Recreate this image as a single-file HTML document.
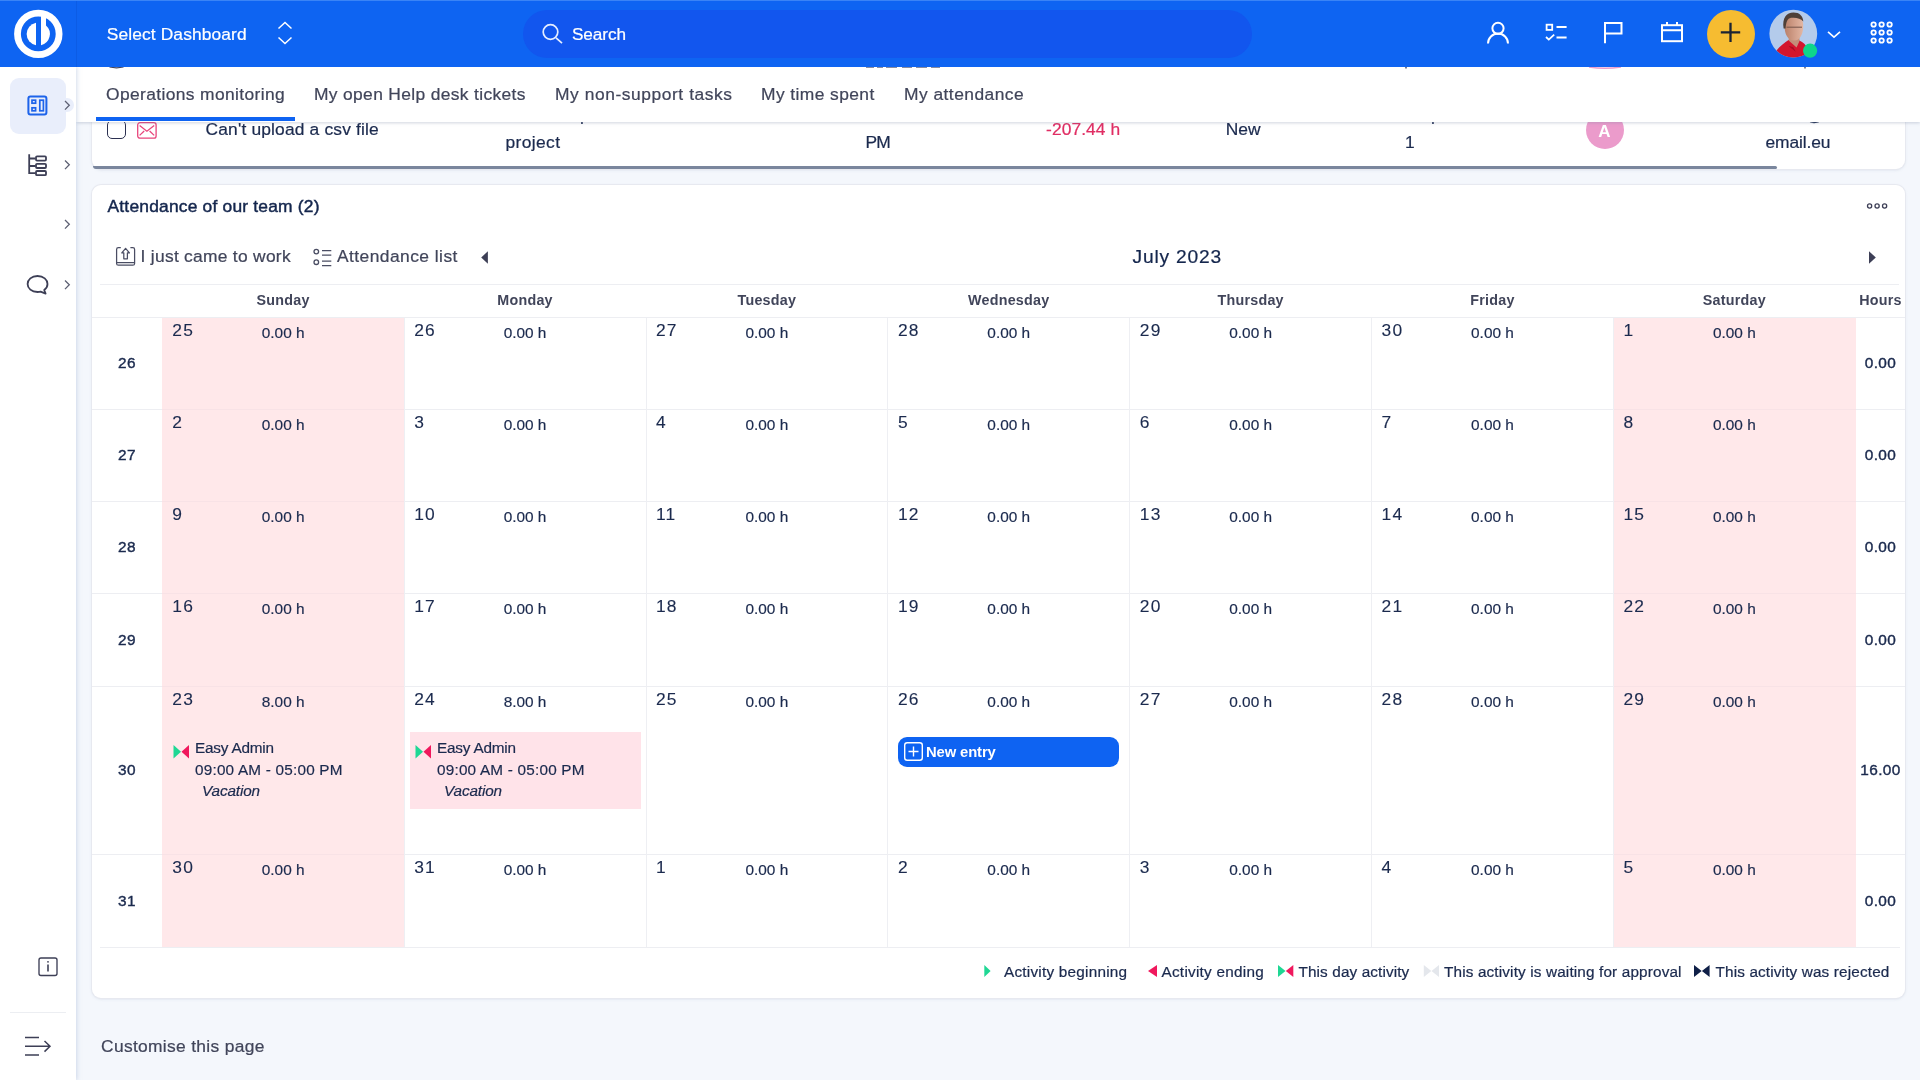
<!DOCTYPE html>
<html lang="en">
<head>
<meta charset="utf-8">
<title>Operations monitoring</title>
<style>
*{box-sizing:border-box;margin:0;padding:0}
html,body{width:1920px;height:1080px;overflow:hidden}
body{position:relative;will-change:transform;background:#f4f7fc;font-family:"Liberation Sans",sans-serif;color:#1b2a4e;font-size:15px}
.abs{position:absolute}
.t{position:absolute;white-space:nowrap;line-height:1;-webkit-text-stroke:0.22px currentColor}
svg{position:absolute;overflow:visible}
/* header */
#hdr{position:absolute;left:0;top:0;width:1920px;height:67px;background:#0e64f2;z-index:20;box-shadow:inset 0 1px 0 #3a84f6}
#hdr .search{position:absolute;left:523px;top:10.4px;width:729px;height:47.6px;border-radius:24px;background:#1256ee}
#hdr .t{color:#fff}
/* sidebar */
#side{position:absolute;left:0;top:67px;width:76px;height:1013px;background:#fff;z-index:15;box-shadow:1px 0 4px rgba(170,185,215,.5)}
#side .act{position:absolute;left:10px;top:11px;width:56px;height:56px;border-radius:9px;background:#e9eefb}
/* tabs */
#tabs{position:absolute;left:76px;top:67px;width:1844px;height:54.5px;background:#fff;z-index:10;box-shadow:0 1px 3px rgba(120,135,160,.35)}
#tabs .t{color:#41455a;font-size:17.4px;top:19.3px}
#tabs .ul{position:absolute;left:20px;top:50px;width:198.6px;height:4px;background:#0e63f2}
/* cards */
.card{position:absolute;background:#fff;border-radius:9px;box-shadow:0 0 0 1px #e7e9f0,0 1px 3px rgba(150,165,190,.3)}
#c1{left:92px;top:100px;width:1813px;height:69px;border-radius:0 0 9px 9px}
.r1{font-size:17.4px;color:#1b2a4e}
#c2{left:92px;top:185px;width:1813px;height:813px}

/* calendar */
.hl{position:absolute;height:1px;background:#edeef2}
.hl2{position:absolute;height:1px;background:#f8e2e6}
.vl{position:absolute;width:1px;background:#eeeff3}
.we{position:absolute;background:#ffe8ea}
.wd{font-size:14.3px;font-weight:700;-webkit-text-stroke:0;letter-spacing:0.25px;color:#41455a;text-align:center}
.wk{font-size:15.4px;letter-spacing:0.4px;-webkit-text-stroke:0.4px currentColor;color:#1b2a4e;text-align:center}
.dn{font-size:17.4px;letter-spacing:1.2px;color:#1b2a4e;-webkit-text-stroke:0.12px currentColor}
.dh{font-size:15.4px;color:#1b2a4e;text-align:center;-webkit-text-stroke:0.18px currentColor}
.ev{-webkit-text-stroke:0.2px currentColor;font-size:15.3px;color:#1b2a4e}
.lg{-webkit-text-stroke:0.22px currentColor;font-size:15.3px;color:#1b2a4e;top:964px}
</style>
<style id="fit">
#h_sd{letter-spacing:0.117px}
#h_se{letter-spacing:-0.094px}
#tb1{letter-spacing:0.377px}
#tb2{letter-spacing:0.351px}
#tb3{letter-spacing:0.566px}
#tb4{letter-spacing:0.421px}
#tb5{letter-spacing:0.468px}
#c2title{letter-spacing:0.205px}
#tl1{letter-spacing:0.280px}
#tl2{letter-spacing:0.459px}
#month{letter-spacing:0.832px}
#ev1a{letter-spacing:-0.198px}
#ev1b{letter-spacing:0.211px}
#ev1c{letter-spacing:-0.124px}
#ev2a{letter-spacing:-0.198px}
#ev2b{letter-spacing:0.211px}
#ev2c{letter-spacing:-0.124px}
#newe{letter-spacing:-0.121px}
#lg1{letter-spacing:0.233px}
#lg2{letter-spacing:0.258px}
#lg3{letter-spacing:0.121px}
#lg4{letter-spacing:0.150px}
#lg5{letter-spacing:0.151px}
#cust{letter-spacing:0.324px}
#r1a{letter-spacing:0.168px}
#r1b{letter-spacing:0.383px}
#r1d{letter-spacing:0.094px}
#r1e{letter-spacing:0.102px}
#r1h{letter-spacing:-0.105px}
</style>
</head>
<body>

<!-- ============ HEADER ============ -->
<div id="hdr">
  <div class="search"></div><div class="abs" style="left:76px;top:1px;width:1px;height:66px;background:rgba(0,30,120,.10)"></div>
  <svg width="1920" height="67" viewBox="0 0 1920 67" style="left:0;top:0" fill="none" stroke="#fff" stroke-width="2" stroke-linecap="butt">
    <!-- logo -->
    <circle cx="38.3" cy="33.9" r="20.8" stroke-width="6.8"/>
    <path d="M36 22.7 A11.5 11.5 0 0 0 36 45.3 Z" fill="#fff" stroke="none"/>
    <path d="M41 15 H46 V25.4 A11.5 11.5 0 0 1 41 45.2 Z" fill="#fff" stroke="none"/>
    <!-- up/down chevrons -->
    <path d="M278.5 28.5 L285 22.5 L291.5 28.5" stroke-width="1.5"/>
    <path d="M278.5 37.5 L285 43.5 L291.5 37.5" stroke-width="1.5"/>
    <!-- search icon -->
    <circle cx="550.5" cy="32" r="7.3" stroke-width="1.7" stroke="#e6eeff"/>
    <path d="M556 37.8 L562 43.2" stroke-width="1.7" stroke="#e6eeff"/>
    <!-- user -->
    <circle cx="1498" cy="28.3" r="5.6"/>
    <path d="M1488 43.5 A10 10 0 0 1 1508 43.5"/>
    <!-- tasks -->
    <rect x="1546.6" y="24.7" width="5.6" height="5.2" stroke-width="1.8"/>
    <path d="M1556.5 27 H1566.6 M1556.5 37.5 H1566.6" stroke-width="1.8"/>
    <path d="M1546 37 L1548.8 39.6 L1554.2 34.6" stroke-width="1.8"/>
    <!-- flag -->
    <path d="M1605 43.2 V23 H1621.5 V33.6 H1605"/>
    <!-- calendar -->
    <rect x="1662" y="25.2" width="20" height="16" />
    <path d="M1662 30.3 H1682 M1667 22 V25.5 M1677 22 V25.5"/>
    <!-- plus button -->
    <circle cx="1731" cy="34" r="24" fill="#f6bc31" stroke="none"/>
    <path d="M1720.8 32.4 H1740.2 M1730.5 22.8 V42" stroke="#1b2333" stroke-width="2.3"/>
    <!-- avatar -->
    <clipPath id="avc"><circle cx="1793.3" cy="33.7" r="23.9"/></clipPath>
    <filter id="avb" x="-10%" y="-10%" width="120%" height="120%"><feGaussianBlur stdDeviation="0.7"/></filter>
    <linearGradient id="avf" x1="0" y1="0" x2="1" y2="0"><stop offset="0" stop-color="#b98069"/><stop offset="0.55" stop-color="#d29f8a"/><stop offset="1" stop-color="#e3b7a4"/></linearGradient>
    <circle cx="1793.3" cy="33.7" r="23.9" fill="#b4cbeb" stroke="none"/>
    <g clip-path="url(#avc)" stroke="none"><g filter="url(#avb)">
      <path d="M1774 60 L1776.5 50.5 C1780 46 1785 42.5 1788.5 40 L1799.5 40.5 C1803 42 1806 45 1808 49 L1811 60 Z" fill="#d3142f"/>
      <path d="M1788.8 37 L1788.6 40.5 L1796.6 47.5 L1799.6 40.8 L1799.2 36 Z" fill="#c38e79"/>
      <path d="M1784.6 24 C1784 34 1788 40.6 1794.2 40.6 C1800 40.6 1803.6 34 1803.2 24.5 C1803 17 1798 14.5 1793.5 14.5 C1789 14.5 1785 17.5 1784.6 24 Z" fill="url(#avf)"/>
      <path d="M1783.6 28.5 C1782 18 1786.5 12.6 1793.5 12.6 C1799.5 12.6 1803 16 1803.3 21.5 C1800.5 18.2 1796 17.2 1791 17.8 C1787.3 18.5 1786 22 1785.6 28.5 Z" fill="#4f4038"/>
      <path d="M1786.5 27.2 H1802 " stroke="#7d5a4e" stroke-width="1.1" fill="none"/>
      <path d="M1788.5 46 L1796 52 L1793 47 Z" fill="#a80f24"/>
    </g></g>
    <circle cx="1810.1" cy="50.7" r="7.1" fill="#0ed68b" stroke="none"/>
    <!-- chevron -->
    <path d="M1828 31.8 L1834 37.2 L1840 31.8" stroke-width="1.6"/>
    <!-- grid -->
    <g stroke-width="1.8">
      <circle cx="1873.6" cy="24.5" r="2.2"/><circle cx="1881.6" cy="24.5" r="2.2"/><circle cx="1889.6" cy="24.5" r="2.2"/>
      <circle cx="1873.6" cy="32.5" r="2.2"/><circle cx="1881.6" cy="32.5" r="2.2"/><circle cx="1889.6" cy="32.5" r="2.2"/>
      <circle cx="1873.6" cy="40.5" r="2.2"/><circle cx="1881.6" cy="40.5" r="2.2"/><circle cx="1889.6" cy="40.5" r="2.2"/>
    </g>
  </svg>

  <div class="t" id="h_sd" style="left:106.7px;top:25.7px;font-size:17.4px">Select Dashboard</div>
  <div class="t" id="h_se" style="left:572px;top:25.7px;font-size:17.2px">Search</div>
</div>

<!-- ============ SIDEBAR ============ -->
<div id="side">
  <div class="act"></div>
  <div class="abs" style="left:60px;top:31px;width:14px;height:14px;border-radius:7px;background:#e9eefb"></div>
  <svg width="77" height="1013" viewBox="0 67 77 1013" style="left:0;top:0" fill="none" stroke="#3d3f56" stroke-width="1.8">
    <!-- dashboard icon -->
    <rect x="28.4" y="96.4" width="18" height="18" rx="2" stroke="#1d63ea" stroke-width="2"/>
    <rect x="32" y="100.2" width="3.6" height="3" stroke="#1d63ea" stroke-width="1.7"/>
    <rect x="32" y="107.8" width="3.6" height="3" stroke="#1d63ea" stroke-width="1.7"/>
    <rect x="39.8" y="100.2" width="3.6" height="10.6" stroke="#1d63ea" stroke-width="1.7"/>
    <!-- chevrons -->
    <g stroke="#5d6073" stroke-width="1.3">
      <path d="M65 101 L69.3 105.3 L65 109.6"/>
      <path d="M65 160.5 L69.3 164.8 L65 169.1"/>
      <path d="M65 220 L69.3 224.3 L65 228.6"/>
      <path d="M65 280.5 L69.3 284.8 L65 289.1"/>
    </g>
    <!-- tree icon -->
    <path d="M29.2 154.3 V173.2 H35.5 M29.2 158.5 H35.5 M29.2 166 H35.5"/>
    <rect x="36" y="156.4" width="10" height="4.2" rx="1"/>
    <rect x="36" y="163.8" width="10" height="4.2" rx="1"/>
    <rect x="36" y="171" width="10" height="4.2" rx="1"/>
    <!-- chat bubble -->
    <path d="M37.5 276 C43.5 276 47.5 279.6 47.5 284 C47.5 286.6 46.2 288.6 44.2 290 L45.6 293.6 L40.6 291.6 C39.6 291.9 38.6 292 37.5 292 C31.6 292 27.6 288.4 27.6 284 C27.6 279.6 31.6 276 37.5 276 Z" stroke-width="1.8" stroke-linejoin="round"/>
    <!-- info -->
    <rect x="39" y="958" width="18" height="17.5" rx="2" stroke-width="1.35"/>
    <path d="M48 964.5 V971.5" stroke-width="1.6"/><circle cx="48" cy="961.8" r="0.9" fill="#3d3f56" stroke="none"/>
    <!-- separator -->
    <path d="M10 1012.5 H66" stroke="#eceef2" stroke-width="1"/>
    <!-- menu arrow -->
    <path d="M25 1037.5 H39 M25 1046.3 H49.5 M25 1055 H39 M44.5 1041 L50 1046.3 L44.5 1051.6" stroke-width="1.5"/>
  </svg>

</div>

<!-- ============ TABS ============ -->
<div id="tabs">
  <div class="ul"></div>
  <div class="t" id="tb1" style="left:30px">Operations monitoring</div>
  <div class="t" id="tb2" style="left:238px">My open Help desk tickets</div>
  <div class="t" id="tb3" style="left:479px">My non-support tasks</div>
  <div class="t" id="tb4" style="left:685px">My time spent</div>
  <div class="t" id="tb5" style="left:828px">My attendance</div>
</div>


<svg width="1920" height="4" viewBox="0 67 1920 4" style="left:0;top:67px;z-index:12" fill="none">
  <path d="M109.5 67 Q116.5 68.6 123.5 67" stroke="#3a3f5c" stroke-width="1.2"/>
  <path d="M866 67.3 H874 M877 67.3 H883 M886 67.3 H897 M902 67.3 H912 M916 67.3 H927 M931 67.3 H940" stroke="#6a7088" stroke-width="1"/>
  <path d="M1406 67 V68.4" stroke="#3a3f5c" stroke-width="1.4"/>
  <path d="M1589 67 Q1605 69.4 1621 67" stroke="#eb9bcb" stroke-width="1.4"/>
  <path d="M1805 67 V68.6" stroke="#3a3f5c" stroke-width="1.3"/>
</svg>
<!-- ============ CARD 1 (partial row) ============ -->
<div class="card" id="c1"></div>
<div class="abs" style="left:93px;top:166.3px;width:1684px;height:2.8px;background:#7a869d;border-radius:0 1.5px 1.5px 3px"></div>
<div class="abs" style="left:107px;top:120px;width:19px;height:19px;border:1.6px solid #2b3050;border-radius:5px;background:#fff"></div>
<svg width="20" height="17" viewBox="0 0 20 17" style="left:137px;top:122px" fill="none" stroke="#e8467c" stroke-width="1.3">
  <rect x="0.7" y="0.7" width="18.4" height="15.4" rx="2.2"/>
  <path d="M2.6 3.4 L9.9 9.2 L17.2 3.4 M2.6 13.4 L7.2 9 M17.2 13.4 L12.6 9"/>
</svg>
<div class="t r1" id="r1a" style="left:205.5px;top:121px">Can't upload a csv file</div>
<div class="t r1" id="r1b0" style="left:505.5px;top:106.5px">Demo help desk</div>
<div class="t r1" id="r1b" style="left:505.5px;top:134px">project</div>
<div class="t r1" id="r1c0" style="left:865.5px;top:106.5px">07/25 3:30</div>
<div class="t r1" id="r1c" style="left:865.5px;top:134px;letter-spacing:-0.8px">PM</div>
<div class="t r1" id="r1d" style="left:1046px;top:121px;color:#e02d63">-207.44 h</div>
<div class="t r1" id="r1e" style="left:1225.7px;top:121px">New</div>
<div class="t r1" id="r1f0" style="left:1405px;top:106.5px">Help desk level</div>
<div class="t r1" id="r1f" style="left:1405px;top:134px">1</div>
<div class="abs" style="left:1585.5px;top:111px;width:38px;height:38px;border-radius:19px;background:#eb9bcb"></div>
<div class="t" id="r1g" style="left:1585.5px;width:38px;text-align:center;top:122.5px;font-size:17px;font-weight:700;color:#fff;-webkit-text-stroke:0">A</div>
<div class="t r1" id="r1h0" style="left:1765.5px;top:106.5px">client@test-</div>
<div class="t r1" id="r1h" style="left:1765.5px;top:134px">email.eu</div>


<!-- ============ CARD 2 (attendance) ============ -->
<div class="card" id="c2"></div>
<div class="t" id="c2title" style="left:107.5px;top:197.8px;font-size:17.4px;color:#14264d;-webkit-text-stroke:0.45px currentColor">Attendance of our team (2)</div>
<div class="t" id="tl1" style="left:140.6px;top:247.6px;font-size:17.4px;color:#41455a">I just came to work</div>
<div class="t" id="tl2" style="left:336.9px;top:247.6px;font-size:17.4px;color:#41455a">Attendance list</div>
<div class="t" id="month" style="left:1132.5px;top:247.2px;font-size:19.2px;color:#14264d">July 2023</div>
<!-- CAL -->
<div class="t wd" style="left:162.2px;width:241.9px;top:293px">Sunday</div>
<div class="t wd" style="left:404.1px;width:241.9px;top:293px">Monday</div>
<div class="t wd" style="left:645.9px;width:241.9px;top:293px">Tuesday</div>
<div class="t wd" style="left:887.8px;width:241.9px;top:293px">Wednesday</div>
<div class="t wd" style="left:1129.7px;width:241.9px;top:293px">Thursday</div>
<div class="t wd" style="left:1371.5px;width:241.9px;top:293px">Friday</div>
<div class="t wd" style="left:1613.4px;width:241.9px;top:293px">Saturday</div>
<div class="t wd" style="left:1856px;width:49px;top:293px">Hours</div>
<div class="hl" style="left:100px;top:284px;width:1799px"></div>
<div class="hl" style="left:92px;top:317px;width:1813px"></div>
<div class="hl" style="left:92px;top:409px;width:1813px"></div>
<div class="hl" style="left:92px;top:501px;width:1813px"></div>
<div class="hl" style="left:92px;top:593px;width:1813px"></div>
<div class="hl" style="left:92px;top:686px;width:1813px"></div>
<div class="hl" style="left:92px;top:854px;width:1813px"></div>
<div class="hl" style="left:100px;top:947px;width:1800px"></div>
<div class="we" style="left:162px;top:318px;width:242px;height:629px"></div>
<div class="we" style="left:1613px;top:318px;width:243px;height:629px"></div>
<div class="hl2" style="left:162px;top:409px;width:242px"></div>
<div class="hl2" style="left:1613px;top:409px;width:243px"></div>
<div class="hl2" style="left:162px;top:501px;width:242px"></div>
<div class="hl2" style="left:1613px;top:501px;width:243px"></div>
<div class="hl2" style="left:162px;top:593px;width:242px"></div>
<div class="hl2" style="left:1613px;top:593px;width:243px"></div>
<div class="hl2" style="left:162px;top:686px;width:242px"></div>
<div class="hl2" style="left:1613px;top:686px;width:243px"></div>
<div class="hl2" style="left:162px;top:854px;width:242px"></div>
<div class="hl2" style="left:1613px;top:854px;width:243px"></div>
<div class="vl" style="left:404px;top:318px;height:629px"></div>
<div class="vl" style="left:646px;top:318px;height:629px"></div>
<div class="vl" style="left:887px;top:318px;height:629px"></div>
<div class="vl" style="left:1129px;top:318px;height:629px"></div>
<div class="vl" style="left:1371px;top:318px;height:629px"></div>
<div class="vl" style="left:1613px;top:318px;height:629px"></div>
<div class="t wk" style="left:92px;width:70px;top:355.2px">26</div>
<div class="t wk" style="left:1856px;width:49px;top:355.2px">0.00</div>
<div class="t dn" style="left:172.3px;top:321.5px">25</div>
<div class="t dh" style="left:162.2px;width:241.9px;top:324.7px">0.00 h</div>
<div class="t dn" style="left:414.2px;top:321.5px">26</div>
<div class="t dh" style="left:404.1px;width:241.9px;top:324.7px">0.00 h</div>
<div class="t dn" style="left:656.0px;top:321.5px">27</div>
<div class="t dh" style="left:645.9px;width:241.9px;top:324.7px">0.00 h</div>
<div class="t dn" style="left:897.9px;top:321.5px">28</div>
<div class="t dh" style="left:887.8px;width:241.9px;top:324.7px">0.00 h</div>
<div class="t dn" style="left:1139.8px;top:321.5px">29</div>
<div class="t dh" style="left:1129.7px;width:241.9px;top:324.7px">0.00 h</div>
<div class="t dn" style="left:1381.6px;top:321.5px">30</div>
<div class="t dh" style="left:1371.5px;width:241.9px;top:324.7px">0.00 h</div>
<div class="t dn" style="left:1623.5px;top:321.5px">1</div>
<div class="t dh" style="left:1613.4px;width:241.9px;top:324.7px">0.00 h</div>
<div class="t wk" style="left:92px;width:70px;top:447.2px">27</div>
<div class="t wk" style="left:1856px;width:49px;top:447.2px">0.00</div>
<div class="t dn" style="left:172.3px;top:413.5px">2</div>
<div class="t dh" style="left:162.2px;width:241.9px;top:416.7px">0.00 h</div>
<div class="t dn" style="left:414.2px;top:413.5px">3</div>
<div class="t dh" style="left:404.1px;width:241.9px;top:416.7px">0.00 h</div>
<div class="t dn" style="left:656.0px;top:413.5px">4</div>
<div class="t dh" style="left:645.9px;width:241.9px;top:416.7px">0.00 h</div>
<div class="t dn" style="left:897.9px;top:413.5px">5</div>
<div class="t dh" style="left:887.8px;width:241.9px;top:416.7px">0.00 h</div>
<div class="t dn" style="left:1139.8px;top:413.5px">6</div>
<div class="t dh" style="left:1129.7px;width:241.9px;top:416.7px">0.00 h</div>
<div class="t dn" style="left:1381.6px;top:413.5px">7</div>
<div class="t dh" style="left:1371.5px;width:241.9px;top:416.7px">0.00 h</div>
<div class="t dn" style="left:1623.5px;top:413.5px">8</div>
<div class="t dh" style="left:1613.4px;width:241.9px;top:416.7px">0.00 h</div>
<div class="t wk" style="left:92px;width:70px;top:539.2px">28</div>
<div class="t wk" style="left:1856px;width:49px;top:539.2px">0.00</div>
<div class="t dn" style="left:172.3px;top:505.5px">9</div>
<div class="t dh" style="left:162.2px;width:241.9px;top:508.7px">0.00 h</div>
<div class="t dn" style="left:414.2px;top:505.5px">10</div>
<div class="t dh" style="left:404.1px;width:241.9px;top:508.7px">0.00 h</div>
<div class="t dn" style="left:656.0px;top:505.5px">11</div>
<div class="t dh" style="left:645.9px;width:241.9px;top:508.7px">0.00 h</div>
<div class="t dn" style="left:897.9px;top:505.5px">12</div>
<div class="t dh" style="left:887.8px;width:241.9px;top:508.7px">0.00 h</div>
<div class="t dn" style="left:1139.8px;top:505.5px">13</div>
<div class="t dh" style="left:1129.7px;width:241.9px;top:508.7px">0.00 h</div>
<div class="t dn" style="left:1381.6px;top:505.5px">14</div>
<div class="t dh" style="left:1371.5px;width:241.9px;top:508.7px">0.00 h</div>
<div class="t dn" style="left:1623.5px;top:505.5px">15</div>
<div class="t dh" style="left:1613.4px;width:241.9px;top:508.7px">0.00 h</div>
<div class="t wk" style="left:92px;width:70px;top:631.7px">29</div>
<div class="t wk" style="left:1856px;width:49px;top:631.7px">0.00</div>
<div class="t dn" style="left:172.3px;top:597.5px">16</div>
<div class="t dh" style="left:162.2px;width:241.9px;top:600.7px">0.00 h</div>
<div class="t dn" style="left:414.2px;top:597.5px">17</div>
<div class="t dh" style="left:404.1px;width:241.9px;top:600.7px">0.00 h</div>
<div class="t dn" style="left:656.0px;top:597.5px">18</div>
<div class="t dh" style="left:645.9px;width:241.9px;top:600.7px">0.00 h</div>
<div class="t dn" style="left:897.9px;top:597.5px">19</div>
<div class="t dh" style="left:887.8px;width:241.9px;top:600.7px">0.00 h</div>
<div class="t dn" style="left:1139.8px;top:597.5px">20</div>
<div class="t dh" style="left:1129.7px;width:241.9px;top:600.7px">0.00 h</div>
<div class="t dn" style="left:1381.6px;top:597.5px">21</div>
<div class="t dh" style="left:1371.5px;width:241.9px;top:600.7px">0.00 h</div>
<div class="t dn" style="left:1623.5px;top:597.5px">22</div>
<div class="t dh" style="left:1613.4px;width:241.9px;top:600.7px">0.00 h</div>
<div class="t wk" style="left:92px;width:70px;top:762.2px">30</div>
<div class="t wk" style="left:1856px;width:49px;top:762.2px">16.00</div>
<div class="t dn" style="left:172.3px;top:690.5px">23</div>
<div class="t dh" style="left:162.2px;width:241.9px;top:693.7px">8.00 h</div>
<div class="t dn" style="left:414.2px;top:690.5px">24</div>
<div class="t dh" style="left:404.1px;width:241.9px;top:693.7px">8.00 h</div>
<div class="t dn" style="left:656.0px;top:690.5px">25</div>
<div class="t dh" style="left:645.9px;width:241.9px;top:693.7px">0.00 h</div>
<div class="t dn" style="left:897.9px;top:690.5px">26</div>
<div class="t dh" style="left:887.8px;width:241.9px;top:693.7px">0.00 h</div>
<div class="t dn" style="left:1139.8px;top:690.5px">27</div>
<div class="t dh" style="left:1129.7px;width:241.9px;top:693.7px">0.00 h</div>
<div class="t dn" style="left:1381.6px;top:690.5px">28</div>
<div class="t dh" style="left:1371.5px;width:241.9px;top:693.7px">0.00 h</div>
<div class="t dn" style="left:1623.5px;top:690.5px">29</div>
<div class="t dh" style="left:1613.4px;width:241.9px;top:693.7px">0.00 h</div>
<div class="t wk" style="left:92px;width:70px;top:892.7px">31</div>
<div class="t wk" style="left:1856px;width:49px;top:892.7px">0.00</div>
<div class="t dn" style="left:172.3px;top:858.5px">30</div>
<div class="t dh" style="left:162.2px;width:241.9px;top:861.7px">0.00 h</div>
<div class="t dn" style="left:414.2px;top:858.5px">31</div>
<div class="t dh" style="left:404.1px;width:241.9px;top:861.7px">0.00 h</div>
<div class="t dn" style="left:656.0px;top:858.5px">1</div>
<div class="t dh" style="left:645.9px;width:241.9px;top:861.7px">0.00 h</div>
<div class="t dn" style="left:897.9px;top:858.5px">2</div>
<div class="t dh" style="left:887.8px;width:241.9px;top:861.7px">0.00 h</div>
<div class="t dn" style="left:1139.8px;top:858.5px">3</div>
<div class="t dh" style="left:1129.7px;width:241.9px;top:861.7px">0.00 h</div>
<div class="t dn" style="left:1381.6px;top:858.5px">4</div>
<div class="t dh" style="left:1371.5px;width:241.9px;top:861.7px">0.00 h</div>
<div class="t dn" style="left:1623.5px;top:858.5px">5</div>
<div class="t dh" style="left:1613.4px;width:241.9px;top:861.7px">0.00 h</div>
<!-- events -->
<div class="abs" style="left:410px;top:731.5px;width:231px;height:77px;background:#ffe3e9"></div>
<div class="t ev" id="ev1a" style="left:195px;top:740px">Easy Admin</div>
<div class="t ev" id="ev1b" style="left:195px;top:762px">09:00 AM - 05:00 PM</div>
<div class="t ev" id="ev1c" style="left:202px;top:783px;font-style:italic">Vacation</div>
<div class="t ev" id="ev2a" style="left:437px;top:740px">Easy Admin</div>
<div class="t ev" id="ev2b" style="left:437px;top:762px">09:00 AM - 05:00 PM</div>
<div class="t ev" id="ev2c" style="left:444px;top:783px;font-style:italic">Vacation</div>
<div class="abs" style="left:897.6px;top:736.5px;width:221.8px;height:30.6px;border-radius:9px;background:#0e63f2"></div>
<div class="t" id="newe" style="left:926px;top:744.6px;font-size:14.8px;font-weight:700;color:#fff;-webkit-text-stroke:0">New entry</div>
<!-- legend -->
<div class="t lg" id="lg1" style="left:1004px">Activity beginning</div>
<div class="t lg" id="lg2" style="left:1161.5px">Activity ending</div>
<div class="t lg" id="lg3" style="left:1298.5px">This day activity</div>
<div class="t lg" id="lg4" style="left:1444px">This activity is waiting for approval</div>
<div class="t lg" id="lg5" style="left:1715.5px">This activity was rejected</div>



<svg width="1920" height="1080" viewBox="0 0 1920 1080" style="left:0;top:0;pointer-events:none" fill="none">
  <!-- ooo -->
  <g stroke="#3d3f56" stroke-width="1.3">
    <circle cx="1869.6" cy="206" r="2.1"/><circle cx="1877.1" cy="206" r="2.1"/><circle cx="1884.6" cy="206" r="2.1"/>
  </g>
  <!-- came to work icon -->
  <g stroke="#4a4d63" stroke-width="1.25">
    <path d="M120.8 247.7 H118.4 A1.8 1.8 0 0 0 116.6 249.5 V263.4 A1.8 1.8 0 0 0 118.4 265.2 H132.8 A1.8 1.8 0 0 0 134.6 263.4 V249.5 A1.8 1.8 0 0 0 132.8 247.7 H130.4"/>
    <path d="M116.6 262.6 H134.6"/>
    <path d="M125.6 248.3 L129.4 252.9 H127.4 V258.8 H123.8 V252.9 H121.8 Z" stroke-linejoin="round"/>
  </g>
  <!-- list icon -->
  <g stroke="#4a4d63" stroke-width="1.3">
    <circle cx="316.3" cy="251.6" r="2.3"/><circle cx="316.3" cy="262.2" r="2.3"/>
    <path d="M322 250.6 H331.3 M322 255.1 H331.3 M322 261.1 H331.3 M322 265.6 H331.3"/>
  </g>
  <!-- month arrows -->
  <path d="M487.9 251.2 V263.8 L481.2 257.5 Z" fill="#3d3f56"/>
  <path d="M1869 251.2 V263.8 L1875.8 257.5 Z" fill="#3d3f56"/>
  <!-- event bowties -->
  <path d="M173.5 745 L181 751.8 L173.5 758.6 Z" fill="#1fd794"/>
  <path d="M189 745 L181.5 751.8 L189 758.6 Z" fill="#f0185d"/>
  <path d="M415.5 745 L423 751.8 L415.5 758.6 Z" fill="#1fd794"/>
  <path d="M431 745 L423.5 751.8 L431 758.6 Z" fill="#f0185d"/>
  <!-- new entry icon -->
  <rect x="904.7" y="742.7" width="17.6" height="17.6" rx="2.5" stroke="#fff" stroke-width="1.4"/>
  <path d="M908.5 751.5 H918.5 M913.5 746.5 V756.5" stroke="#fff" stroke-width="1.4"/>
  <!-- legend icons -->
  <path d="M984.3 965 L990.6 971 L984.3 977 Z" fill="#1fd794"/>
  <path d="M1157 965 L1148 971 L1157 977 Z" fill="#f0185d"/>
  <path d="M1278 965 L1285.5 971 L1278 977 Z" fill="#1fd794"/>
  <path d="M1293.3 965 L1285.8 971 L1293.3 977 Z" fill="#f0185d"/>
  <path d="M1423.8 965 L1431.3 971 L1423.8 977 Z M1439 965 L1431.5 971 L1439 977 Z" fill="#e4e7ec"/>
  <path d="M1694 965 L1701.7 971 L1694 977 Z M1709.6 965 L1701.9 971 L1709.6 977 Z" fill="#0f1f47"/>
</svg>
<div class="t" id="cust" style="left:101px;top:1038.3px;font-size:17.4px;color:#41455a">Customise this page</div>

</body>
</html>
